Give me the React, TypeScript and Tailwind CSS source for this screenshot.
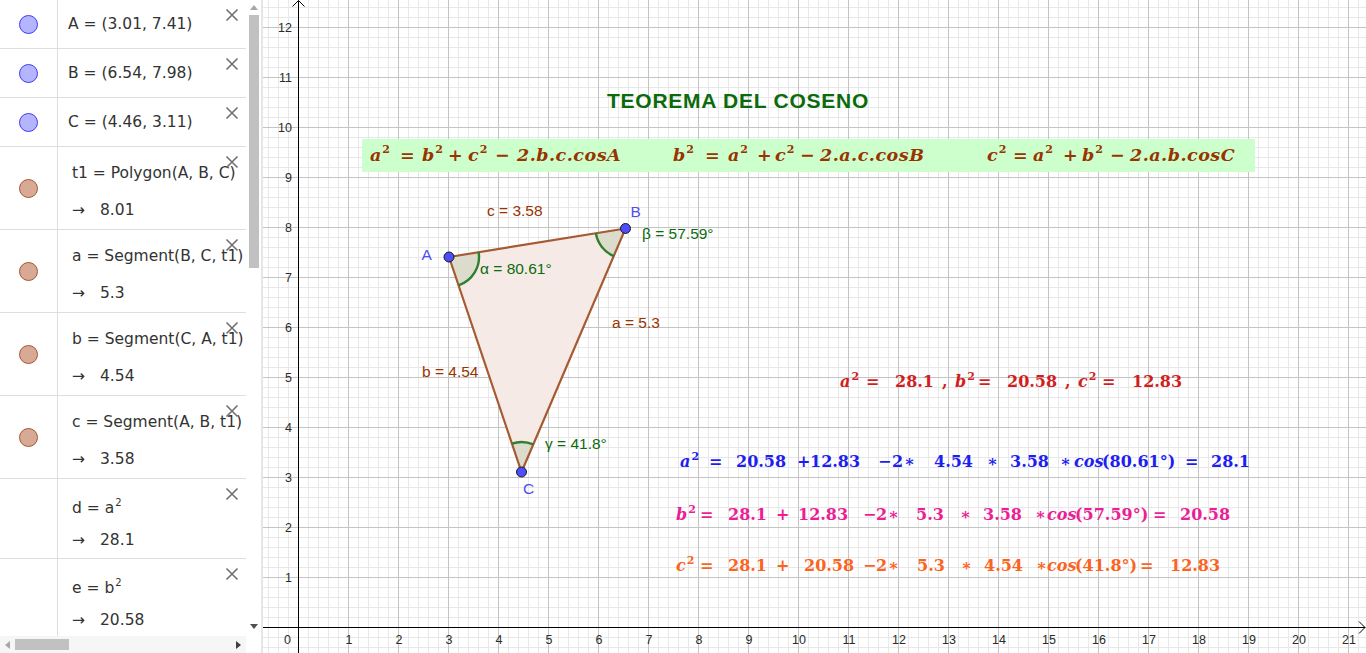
import React from 'react';

type Kind = 'point' | 'shape' | 'none';

const X0 = 298.5;
const Y0 = 627.5;
const U = 50;
const px = (u: number) => X0 + U * u;
const py = (v: number) => Y0 - U * v;

const A = { x: px(3.01), y: py(7.41) };
const B = { x: px(6.54), y: py(7.98) };
const C = { x: px(4.46), y: py(3.11) };

function sector(p: { x: number; y: number }, q1: { x: number; y: number }, q2: { x: number; y: number }, r: number) {
  const d1 = { x: q1.x - p.x, y: q1.y - p.y };
  const d2 = { x: q2.x - p.x, y: q2.y - p.y };
  const l1 = Math.hypot(d1.x, d1.y);
  const l2 = Math.hypot(d2.x, d2.y);
  const a = { x: p.x + (d1.x / l1) * r, y: p.y + (d1.y / l1) * r };
  const b = { x: p.x + (d2.x / l2) * r, y: p.y + (d2.y / l2) * r };
  const sweep = d1.x * d2.y - d1.y * d2.x > 0 ? 1 : 0;
  const arc = `M${a.x} ${a.y} A${r} ${r} 0 0 ${sweep} ${b.x} ${b.y}`;
  return { fill: `M${p.x} ${p.y} L${a.x} ${a.y} A${r} ${r} 0 0 ${sweep} ${b.x} ${b.y} Z`, arc };
}

function Dot({ kind }: { kind: Kind }) {
  if (kind === 'none') return null;
  if (kind === 'point') return <span className="block h-[19px] w-[19px] rounded-full border border-[#3c3cf2] bg-[#b4b4ff]" />;
  return <span className="block h-[19px] w-[19px] rounded-full border border-[#a4572f] bg-[#d8a994]" />;
}

function Close() {
  return (
    <svg className="absolute right-[7px] top-[8px]" width="14" height="14" viewBox="0 0 14 14">
      <path d="M1.5 1.5 12.5 12.5M12.5 1.5 1.5 12.5" stroke="#707070" strokeWidth="1.6" fill="none" />
    </svg>
  );
}

function Row({ kind, h, children }: { kind: Kind; h: string; children: React.ReactNode }) {
  return (
    <div className={`flex shrink-0 border-b border-[#dedede] ${h}`}>
      <div className="flex w-[58px] shrink-0 items-center justify-center border-r border-[#dedede]">
        <Dot kind={kind} />
      </div>
      <div className="relative min-w-0 flex-1 overflow-hidden">
        {children}
        <Close />
      </div>
    </div>
  );
}

function One({ children }: { children: React.ReactNode }) {
  return <div className="flex h-full items-center whitespace-nowrap pl-[10px] pt-[2px]">{children}</div>;
}

function Two({ def, value, tight }: { def: React.ReactNode; value: string; tight?: boolean }) {
  return (
    <div className={`whitespace-nowrap pl-[14px] ${tight ? 'pt-[19px]' : 'pt-[16px]'}`}>
      <div className="h-[20px] leading-[20px]">{def}</div>
      <div className={`h-[20px] leading-[20px] ${tight ? 'mt-[12px]' : 'mt-[17px]'}`}>
        <span className="inline-block w-[28px]">→</span>
        {value}
      </div>
    </div>
  );
}

function Pow({ v }: { v: string }) {
  return (
    <>
      {v}
      <sup className="relative -top-[7px] ml-[1px] text-[10px]">2</sup>
    </>
  );
}

function AlgebraPanel() {
  return (
    <div className="flex w-[263px] shrink-0 flex-col border-r-2 border-[#e6e6e6] font-['DejaVu_Sans',sans-serif] text-[15.5px] text-[#333]">
      <div className="flex min-h-0 flex-1">
        <div className="flex w-[246px] flex-col overflow-hidden">
          <Row kind="point" h="h-[49px]"><One>A = (3.01, 7.41)</One></Row>
          <Row kind="point" h="h-[49px]"><One>B = (6.54, 7.98)</One></Row>
          <Row kind="point" h="h-[49px]"><One>C = (4.46, 3.11)</One></Row>
          <Row kind="shape" h="h-[83px]"><Two def="t1 = Polygon(A, B, C)" value="8.01" /></Row>
          <Row kind="shape" h="h-[83px]"><Two def="a = Segment(B, C, t1)" value="5.3" /></Row>
          <Row kind="shape" h="h-[83px]"><Two def="b = Segment(C, A, t1)" value="4.54" /></Row>
          <Row kind="shape" h="h-[83px]"><Two def="c = Segment(A, B, t1)" value="3.58" /></Row>
          <Row kind="none" h="h-[80px]"><Two tight def={<>d = <Pow v="a" /></>} value="28.1" /></Row>
          <Row kind="none" h="h-[80px]"><Two tight def={<>e = <Pow v="b" /></>} value="20.58" /></Row>
        </div>
        <div className="flex w-[15px] flex-col items-center bg-white">
          <div className="flex h-[15px] items-center justify-center">
            <svg width="8" height="5" viewBox="0 0 8 5"><path d="M0 5 4 0 8 5Z" fill="#a8a8a8" /></svg>
          </div>
          <div className="flex-1">
            <div className="h-[253px] w-[10px] bg-[#c1c1c1]" />
          </div>
          <div className="flex h-[17px] items-start justify-center pt-[5px]">
            <svg width="8" height="5" viewBox="0 0 8 5"><path d="M0 0 4 5 8 0Z" fill="#505050" /></svg>
          </div>
        </div>
      </div>
      <div className="flex h-[17px] shrink-0">
        <div className="flex w-[246px] items-center bg-[#f6f6f6]">
          <div className="flex w-[15px] justify-center">
            <svg width="5" height="8" viewBox="0 0 5 8"><path d="M5 0 0 4 5 8Z" fill="#a8a8a8" /></svg>
          </div>
          <div className="flex-1">
            <div className="h-[11px] w-[54px] bg-[#c1c1c1]" />
          </div>
          <div className="flex w-[15px] justify-center">
            <svg width="5" height="8" viewBox="0 0 5 8"><path d="M0 0 5 4 0 8Z" fill="#404040" /></svg>
          </div>
        </div>
        <div className="flex-1 bg-white" />
      </div>
    </div>
  );
}

function T({ w, children }: { w?: string; children: React.ReactNode }) {
  return <span className={`inline-block shrink-0 whitespace-nowrap ${w ?? ''}`}>{children}</span>;
}

function Sq({ v, big }: { v: string; big?: boolean }) {
  return (
    <>
      <i className="italic">{v}</i>
      <sup className={big ? 'relative -top-[8px] ml-[1px] text-[11px]' : 'relative -top-[7px] ml-[1px] text-[11px]'}>2</sup>
    </>
  );
}

function Cos() {
  return <i className="italic">cos</i>;
}

function Grid() {
  const minorX = Array.from({ length: 110 }, (_, i) => i - 3).filter((k) => k % 5 !== 0);
  const majorX = Array.from({ length: 22 }, (_, i) => i * 5);
  const minorY = Array.from({ length: 65 }, (_, i) => i - 2).filter((k) => k % 5 !== 0);
  const majorY = Array.from({ length: 13 }, (_, i) => i * 5);
  const sA = sector(A, B, C, 30);
  const sB = sector(B, C, A, 30);
  const sC = sector(C, A, B, 30);
  return (
    <svg className="block" width="1103" height="653" viewBox="263 0 1103 653">
      <g shapeRendering="crispEdges">
        {minorX.map((k) => (
          <line key={`mx${k}`} x1={X0 + 10 * k} x2={X0 + 10 * k} y1={0} y2={653} stroke="#e8e8e8" />
        ))}
        {minorY.map((k) => (
          <line key={`my${k}`} y1={Y0 - 10 * k} y2={Y0 - 10 * k} x1={263} x2={1366} stroke="#e8e8e8" />
        ))}
        {majorX.map((k) => (
          <line key={`Mx${k}`} x1={X0 + 10 * k} x2={X0 + 10 * k} y1={0} y2={653} stroke="#c4c4c4" />
        ))}
        {majorY.map((k) => (
          <line key={`My${k}`} y1={Y0 - 10 * k} y2={Y0 - 10 * k} x1={263} x2={1366} stroke="#c4c4c4" />
        ))}
        <line x1={263} x2={1365} y1={Y0} y2={Y0} stroke="#000" />
        <line x1={X0} x2={X0} y1={1} y2={653} stroke="#000" />
      </g>
      <polyline points={`1359,621.5 1365,627.5 1359,633.5`} fill="none" stroke="#000" />
      <polyline points={`292.5,6.5 298.5,0.5 304.5,6.5`} fill="none" stroke="#000" />

      <g className="font-['Liberation_Sans',Arial,sans-serif]" fontSize="12.5" fill="#2a2a2a">
        <text x={287.5} y={644} textAnchor="middle">0</text>
        {Array.from({ length: 21 }, (_, i) => i + 1).map((u) => (
          <text key={`xl${u}`} x={px(u) + 0.5} y={644} textAnchor="middle">{u}</text>
        ))}
        {Array.from({ length: 12 }, (_, i) => i + 1).map((v) => (
          <text key={`yl${v}`} x={292} y={py(v) + 4.5} textAnchor="end">{v}</text>
        ))}
      </g>

      <polygon points={`${A.x},${A.y} ${B.x},${B.y} ${C.x},${C.y}`} fill="#f5eae5" />
      <path d={sA.fill} fill="rgba(0,100,0,0.1)" />
      <path d={sB.fill} fill="rgba(0,100,0,0.1)" />
      <path d={sC.fill} fill="rgba(0,100,0,0.1)" />
      <g stroke="#a65a32" strokeWidth="2.2" strokeLinecap="round">
        <line x1={A.x} y1={A.y} x2={B.x} y2={B.y} />
        <line x1={B.x} y1={B.y} x2={C.x} y2={C.y} />
        <line x1={C.x} y1={C.y} x2={A.x} y2={A.y} />
      </g>
      <g stroke="#2f7f2f" strokeWidth="2.4" fill="none">
        <path d={sA.arc} />
        <path d={sB.arc} />
        <path d={sC.arc} />
      </g>
      {[A, B, C].map((p, i) => (
        <circle key={i} cx={p.x} cy={p.y} r={5} fill="#4d4dff" stroke="#1a1a1a" strokeWidth="1" />
      ))}

      <g className="font-['Liberation_Sans',Arial,sans-serif]" fontSize="15.5">
        <text x={421.5} y={259.5} fill="#4f4ff0">A</text>
        <text x={630.5} y={217} fill="#4f4ff0">B</text>
        <text x={523} y={493.5} fill="#4f4ff0">C</text>
        <text x={487} y={215.5} fill="#993300">c = 3.58</text>
        <text x={612} y={328} fill="#993300">a = 5.3</text>
        <text x={422} y={376.5} fill="#993300">b = 4.54</text>
        <text x={642} y={238.5} fill="#0d6b0d">β = 57.59°</text>
        <text x={480} y={273.5} fill="#0d6b0d">α = 80.61°</text>
        <text x={545} y={448.5} fill="#0d6b0d">γ = 41.8°</text>
      </g>
    </svg>
  );
}

function Graphics() {
  return (
    <div className="relative h-[653px] flex-1 overflow-hidden bg-white">
      <Grid />

      <div className="absolute left-[344px] top-[90px] font-['Liberation_Sans',Arial,sans-serif] text-[21px] font-bold leading-none tracking-[0.75px] text-[#0b6b0b]">
        TEOREMA DEL COSENO
      </div>

      <div className="absolute left-[99px] top-[139px] flex h-[33px] w-[893px] items-baseline bg-[#ccffcc] pl-[8px] pt-[8px] font-['DejaVu_Serif',serif] text-[17.5px] font-bold leading-none text-[#993300]">
        <T w="w-[30px]"><Sq v="a" big /></T>
        <T w="w-[22px]">=</T>
        <T w="w-[26px]"><Sq v="b" big /></T>
        <T w="w-[20px]">+</T>
        <T w="w-[27px]"><Sq v="c" big /></T>
        <T w="w-[22px]">−</T>
        <T w="w-[156px]"><i className="italic tracking-[0.5px]">2.b.c.cosA</i></T>
        <T w="w-[32px]"><Sq v="b" big /></T>
        <T w="w-[23px]">=</T>
        <T w="w-[29px]"><Sq v="a" big /></T>
        <T w="w-[18px]">+</T>
        <T w="w-[25px]"><Sq v="c" big /></T>
        <T w="w-[20px]">−</T>
        <T w="w-[167px]"><i className="italic tracking-[0.5px]">2.a.c.cosB</i></T>
        <T w="w-[26px]"><Sq v="c" big /></T>
        <T w="w-[20px]">=</T>
        <T w="w-[30px]"><Sq v="a" big /></T>
        <T w="w-[19px]">+</T>
        <T w="w-[28px]"><Sq v="b" big /></T>
        <T w="w-[20px]">−</T>
        <T><i className="italic tracking-[0.5px]">2.a.b.cosC</i></T>
      </div>

      <div className="absolute left-[577px] top-[374px] flex items-baseline font-['DejaVu_Serif',serif] text-[16px] font-bold leading-none text-[#d21e1e]">
        <T w="w-[26px]"><Sq v="a" /></T>
        <T w="w-[29px]">=</T>
        <T w="w-[47px]">28.1</T>
        <T w="w-[13px]">,</T>
        <T w="w-[23px]"><Sq v="b" /></T>
        <T w="w-[29px]">=</T>
        <T w="w-[58px]">20.58</T>
        <T w="w-[13px]">,</T>
        <T w="w-[24px]"><Sq v="c" /></T>
        <T w="w-[30px]">=</T>
        <T>12.83</T>
      </div>

      <div className="absolute left-[417px] top-[454px] flex items-baseline font-['DejaVu_Serif',serif] text-[16px] font-bold leading-none text-[#1e1ef0]">
        <T w="w-[29px]"><Sq v="a" /></T>
        <T w="w-[27px]">=</T>
        <T w="w-[61px]">20.58</T>
        <T w="w-[13px]">+</T>
        <T w="w-[68px]">12.83</T>
        <T w="w-[14px]">−</T>
        <T w="w-[12px]">2</T>
        <T w="w-[30px]">∗</T>
        <T w="w-[53px]">4.54</T>
        <T w="w-[23px]">∗</T>
        <T w="w-[50px]">3.58</T>
        <T w="w-[14px]">∗</T>
        <T w="w-[28px]"><Cos /></T>
        <T w="w-[83px]">(80.61°)</T>
        <T w="w-[26px]">=</T>
        <T>28.1</T>
      </div>

      <div className="absolute left-[413px] top-[507px] flex items-baseline font-['DejaVu_Serif',serif] text-[16px] font-bold leading-none text-[#eb1e96]">
        <T w="w-[24px]"><Sq v="b" /></T>
        <T w="w-[28px]">=</T>
        <T w="w-[48px]">28.1</T>
        <T w="w-[22px]">+</T>
        <T w="w-[65px]">12.83</T>
        <T w="w-[13px]">−</T>
        <T w="w-[12px]">2</T>
        <T w="w-[28px]">∗</T>
        <T w="w-[44px]">5.3</T>
        <T w="w-[23px]">∗</T>
        <T w="w-[52px]">3.58</T>
        <T w="w-[12px]">∗</T>
        <T w="w-[28px]"><Cos /></T>
        <T w="w-[78px]">(57.59°)</T>
        <T w="w-[27px]">=</T>
        <T>20.58</T>
      </div>

      <div className="absolute left-[413px] top-[558px] flex items-baseline font-['DejaVu_Serif',serif] text-[16px] font-bold leading-none text-[#fa641e]">
        <T w="w-[24px]"><Sq v="c" /></T>
        <T w="w-[28px]">=</T>
        <T w="w-[48px]">28.1</T>
        <T w="w-[28px]">+</T>
        <T w="w-[59px]">20.58</T>
        <T w="w-[13px]">−</T>
        <T w="w-[12px]">2</T>
        <T w="w-[29px]">∗</T>
        <T w="w-[44px]">5.3</T>
        <T w="w-[23px]">∗</T>
        <T w="w-[52px]">4.54</T>
        <T w="w-[11px]">∗</T>
        <T w="w-[28px]"><Cos /></T>
        <T w="w-[65px]">(41.8°)</T>
        <T w="w-[30px]">=</T>
        <T>12.83</T>
      </div>
    </div>
  );
}

export default function App() {
  return (
    <div className="flex h-[653px] w-[1366px] overflow-hidden bg-white">
      <AlgebraPanel />
      <Graphics />
    </div>
  );
}
